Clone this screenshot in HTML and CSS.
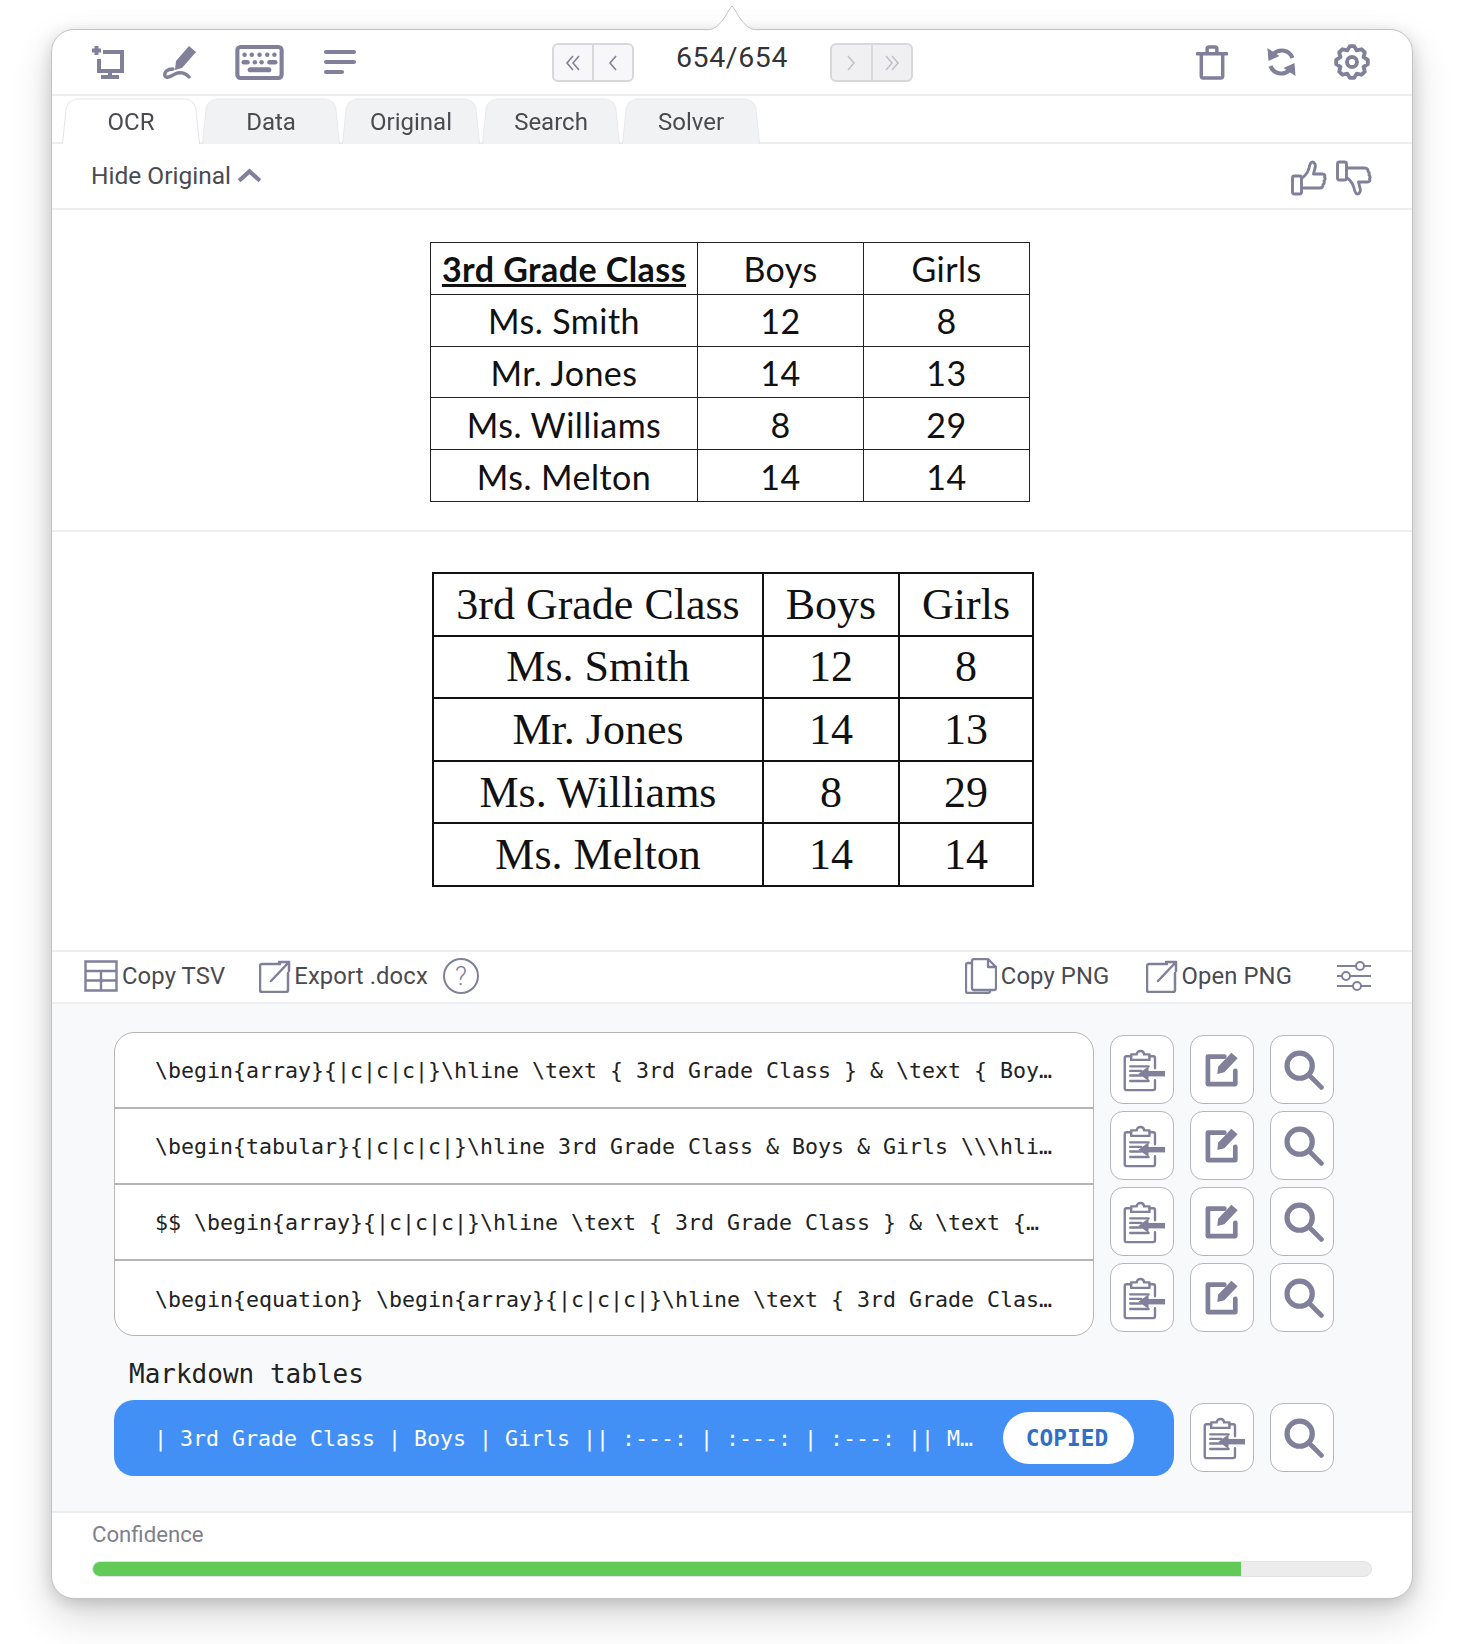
FILE: index.html
```html
<!DOCTYPE html>
<html lang="en">
<head>
<meta charset="utf-8">
<title>Snip</title>
<link rel="stylesheet" href="styles.css">
</head>
<body>
<svg class="defs" width="0" height="0" aria-hidden="true">
  <symbol id="i-clip" viewBox="0 0 48 48"><g fill="none" stroke="currentColor" stroke-width="2.6" stroke-linecap="round" stroke-linejoin="round"><path d="M36 22V11a2 2 0 0 0-2-2h-4M10 9H5a2 2 0 0 0-2 2v33a2 2 0 0 0 2 2h29a2 2 0 0 0 2-2V35"/><path d="M10 13V7h6c0-5 8-5 8 0h6v6z"/><path d="M9 20h20M9 25h12M9 30h12M9 36h20"/></g><path d="M26 25h21v6H26z" fill="currentColor"/><path d="M18 28l11-8v16z" fill="currentColor"/></symbol>
  <symbol id="i-edit" viewBox="0 0 46 46"><path d="M26 6H5v35h35V24" fill="none" stroke="currentColor" stroke-width="6" stroke-linejoin="round" stroke-linecap="round"/><path d="M35 1l8 7-17 18-9 2 1-9z" fill="currentColor"/></symbol>
  <symbol id="i-search" viewBox="0 0 46 46"><circle cx="18" cy="18" r="14.500" fill="none" stroke="currentColor" stroke-width="6"/><path d="M29 29l14 14" stroke="currentColor" stroke-width="5.500" stroke-linecap="round"/></symbol>
  <symbol id="i-ext" viewBox="0 0 32 33"><g fill="none" stroke="currentColor" stroke-width="2.500" stroke-linecap="round" stroke-linejoin="round"><path d="M21 4H3a2 2 0 0 0-2 2v24a2 2 0 0 0 2 2h24a2 2 0 0 0 2-2V13"/><path d="M12 21L30 2M20 2h10v9"/></g></symbol>
  <symbol id="i-thumb" viewBox="0 0 36 36"><g fill="none" stroke="currentColor" stroke-width="2.900" stroke-linejoin="round" stroke-linecap="round"><rect x="1.500" y="16" width="9" height="18" rx="2"/><path d="M11 18c3-2 6-6 7-10 .6-3 1.500-6 3.500-6s3.500 3 2.500 6l-1.500 6h9c2 0 3 1.500 2 3 1 1.500 .5 3-.5 4 .5 1.500 0 3-1 3.500 .3 2-1 3.500-3 3.500H11"/></g></symbol>
</svg>

<div class="window">
  <svg class="notch" width="56" height="27" viewBox="0 0 56 27" aria-hidden="true"><path d="M0 26c10 0 14-4 18-9 4-5 7-12 10-15 3 3 6 10 10 15 4 5 8 9 18 9" fill="#fff" stroke="#c4c4c4" stroke-width="1"/><path d="M0 26.500h56V27H0z" fill="#fff"/></svg>

  <header class="topbar">
    <div class="tools">
      <svg class="ic ic-screen" viewBox="0 0 32 34"><path d="M4.500 1v9M0 5.500h9M11 7h19v19H7V14M18 26v5M9 32h18" fill="none" stroke="currentColor" stroke-width="4"/></svg>
      <svg class="ic ic-pen" viewBox="0 0 34 34"><path d="M26 1l7 6-14 16-7 2 1-9z" fill="currentColor"/><path d="M10 24c-6 0-9 3-8 7 1 3 6 0 10-2s10-2 14 3" fill="none" stroke="currentColor" stroke-width="3.400" stroke-linecap="round"/></svg>
      <svg class="ic ic-keys" viewBox="0 0 47 34"><rect x="2" y="2" width="43" height="30" rx="3" fill="#fff" stroke="currentColor" stroke-width="4"/><g fill="currentColor"><circle cx="9" cy="9.500" r="2.200"/><circle cx="16" cy="9.500" r="2.200"/><circle cx="23.500" cy="9.500" r="2.200"/><circle cx="31" cy="9.500" r="2.200"/><circle cx="38" cy="9.500" r="2.200"/><rect x="6" y="14.500" width="8" height="4.400" rx="2.200"/><circle cx="19" cy="16.700" r="2.200"/><circle cx="25.500" cy="16.700" r="2.200"/><rect x="31" y="14.500" width="10" height="4.400" rx="2.200"/><rect x="12" y="21.500" width="23" height="5" rx="2.500"/></g></svg>
      <svg class="ic ic-lines" viewBox="0 0 32 26"><path d="M2 3h28M2 13h28M2 23h16" stroke="currentColor" stroke-width="4" stroke-linecap="round"/></svg>
    </div>
    <div class="pager">
      <div class="pagebtns">
        <span class="pagebtn"><svg class="chev" viewBox="0 0 18 18"><path d="M9 2L3 9l6 7M15 2L9 9l6 7"/></svg></span>
        <span class="pagebtn"><svg class="chev" viewBox="0 0 18 18"><path d="M12 2L6 9l6 7"/></svg></span>
      </div>
      <span class="count">654/654</span>
      <div class="pagebtns is-off">
        <span class="pagebtn"><svg class="chev" viewBox="0 0 18 18"><path d="M6 2l6 7-6 7"/></svg></span>
        <span class="pagebtn"><svg class="chev" viewBox="0 0 18 18"><path d="M3 2l6 7-6 7M9 2l6 7-6 7"/></svg></span>
      </div>
    </div>
    <div class="tools tools-right">
      <svg class="ic ic-trash" viewBox="0 0 32 36"><path d="M1 9h30M11 8V4a2 2 0 0 1 2-2h6a2 2 0 0 1 2 2v4M5 9v23a2 2 0 0 0 2 2h18a2 2 0 0 0 2-2V9" fill="none" stroke="currentColor" stroke-width="3.600" stroke-linecap="round"/></svg>
      <svg class="ic ic-sync" viewBox="0 0 32 32"><path d="M27 12A11.500 11.500 0 0 0 8 8M5 20a11.500 11.500 0 0 0 19 4" fill="none" stroke="currentColor" stroke-width="4.200"/><path d="M2 2l1 13 11-5zM30 30l-1-13-11 5z" fill="currentColor"/></svg>
      <svg class="ic ic-gear" viewBox="0 0 36 36"><polygon points="15.770,2.160 20.230,2.160 22.780,6.450 27.630,5.220 30.780,8.370 29.550,13.220 33.840,15.770 33.840,20.230 29.550,22.780 30.780,27.630 27.630,30.780 22.780,29.550 20.230,33.840 15.770,33.840 13.220,29.550 8.370,30.780 5.220,27.630 6.450,22.780 2.160,20.230 2.160,15.770 6.450,13.220 5.220,8.370 8.370,5.220 13.220,6.450" fill="none" stroke="currentColor" stroke-width="3.800" stroke-linejoin="round"/><circle cx="18" cy="18" r="5" fill="none" stroke="currentColor" stroke-width="3.800"/></svg>
    </div>
  </header>

  <nav class="tabs">
    <span class="tab is-active">OCR</span>
    <span class="tab">Data</span>
    <span class="tab">Original</span>
    <span class="tab">Search</span>
    <span class="tab">Solver</span>
  </nav>

  <div class="hide-row">
    <span class="hide-label">Hide Original</span>
    <svg class="chev-up" viewBox="0 0 24 14"><path d="M2 12L12 3l10 9" fill="none" stroke="currentColor" stroke-width="4"/></svg>
    <span class="spacer"></span>
    <svg class="thumb"><use href="#i-thumb"/></svg>
    <svg class="thumb thumb-down"><use href="#i-thumb"/></svg>
  </div>

  <section class="original">
    <table class="sheet">
      <tr><th class="c1">3rd Grade Class</th><td class="c2">Boys</td><td class="c3">Girls</td></tr>
      <tr><td>Ms. Smith</td><td>12</td><td>8</td></tr>
      <tr><td>Mr. Jones</td><td>14</td><td>13</td></tr>
      <tr><td>Ms. Williams</td><td>8</td><td>29</td></tr>
      <tr><td>Ms. Melton</td><td>14</td><td>14</td></tr>
    </table>
  </section>

  <section class="rendered">
    <table class="latex">
      <tr><td class="c1">3rd Grade Class</td><td class="c2">Boys</td><td class="c3">Girls</td></tr>
      <tr><td>Ms. Smith</td><td>12</td><td>8</td></tr>
      <tr><td>Mr. Jones</td><td>14</td><td>13</td></tr>
      <tr><td>Ms. Williams</td><td>8</td><td>29</td></tr>
      <tr><td>Ms. Melton</td><td>14</td><td>14</td></tr>
    </table>
  </section>

  <div class="actionsbar">
    <span class="act act-tsv"><svg class="ic-act ic-table" viewBox="0 0 34 32"><path d="M1.500 1.500h31v29h-31zM1.500 11h31M1.500 20.500h31M17 11v19.500" fill="none" stroke="currentColor" stroke-width="2.400"/></svg>Copy TSV</span>
    <span class="act act-docx"><svg class="ic-act"><use href="#i-ext"/></svg>Export .docx</span>
    <span class="help">?</span>
    <span class="spacer"></span>
    <span class="act act-copy"><svg class="ic-act ic-copy" viewBox="0 0 32 36"><path d="M9 1h14l8 8v21a2 2 0 0 1-2 2H9a2 2 0 0 1-2-2V3a2 2 0 0 1 2-2zM23 1v8h8M7 5H3a2 2 0 0 0-2 2v26a2 2 0 0 0 2 2h20a2 2 0 0 0 2-2v-1" fill="none" stroke="currentColor" stroke-width="2.300" stroke-linejoin="round"/></svg>Copy PNG</span>
    <span class="act act-open"><svg class="ic-act"><use href="#i-ext"/></svg>Open PNG</span>
    <svg class="ic-sliders" viewBox="0 0 34 30"><g fill="#fff" stroke="currentColor" stroke-width="2"><path d="M0 5h34M0 15h34M0 25h34"/><circle cx="23" cy="5" r="4"/><circle cx="9" cy="15" r="4"/><circle cx="20" cy="25" r="4"/></g></svg>
  </div>

  <section class="results">
    <div class="result-grid">
      <div class="latex-list">
        <div class="latex-row">\begin{array}{|c|c|c|}\hline \text { 3rd Grade Class } &amp; \text { Boy…</div>
        <div class="latex-row">\begin{tabular}{|c|c|c|}\hline 3rd Grade Class &amp; Boys &amp; Girls \\\hli…</div>
        <div class="latex-row">$$ \begin{array}{|c|c|c|}\hline \text { 3rd Grade Class } &amp; \text {…</div>
        <div class="latex-row">\begin{equation} \begin{array}{|c|c|c|}\hline \text { 3rd Grade Clas…</div>
      </div>
      <div class="btn-grid">
        <button class="sq"><svg class="sq-clip"><use href="#i-clip"/></svg></button><button class="sq"><svg class="sq-edit"><use href="#i-edit"/></svg></button><button class="sq"><svg class="sq-search"><use href="#i-search"/></svg></button>
        <button class="sq"><svg class="sq-clip"><use href="#i-clip"/></svg></button><button class="sq"><svg class="sq-edit"><use href="#i-edit"/></svg></button><button class="sq"><svg class="sq-search"><use href="#i-search"/></svg></button>
        <button class="sq"><svg class="sq-clip"><use href="#i-clip"/></svg></button><button class="sq"><svg class="sq-edit"><use href="#i-edit"/></svg></button><button class="sq"><svg class="sq-search"><use href="#i-search"/></svg></button>
        <button class="sq"><svg class="sq-clip"><use href="#i-clip"/></svg></button><button class="sq"><svg class="sq-edit"><use href="#i-edit"/></svg></button><button class="sq"><svg class="sq-search"><use href="#i-search"/></svg></button>
      </div>
    </div>
    <h2 class="md-title">Markdown tables</h2>
    <div class="md-row">
      <div class="md-bar">
        <span class="md-text">| 3rd Grade Class | Boys | Girls || :---: | :---: | :---: || M…</span>
        <span class="copied">COPIED</span>
      </div>
      <button class="sq"><svg class="sq-clip"><use href="#i-clip"/></svg></button><button class="sq"><svg class="sq-search"><use href="#i-search"/></svg></button>
    </div>
  </section>

  <footer class="confidence">
    <div class="conf-label">Confidence</div>
    <div class="track"><div class="fill" style="width:89.9%"></div></div>
  </footer>
</div>
</body>
</html>
```
FILE: styles.css
```css
* { box-sizing: border-box; }
html, body { margin: 0; padding: 0; background: #fff; }
body {
  width: 1458px;
  height: 1644px;
  overflow: hidden;
  padding: 29px 0 0 51px;
  font-family: "Roboto", "Liberation Sans", sans-serif;
  color: #3f3f46;
}
.defs { position: absolute; }
.window {
  position: relative;
  width: 1362px;
  height: 1570px;
  background: #fff;
  border: 1px solid #c2c2c2;
  border-radius: 23px;
  box-shadow: 0 18px 40px rgba(0, 0, 0, .16), -4px 4px 16px rgba(0, 0, 0, .08), 4px 4px 16px rgba(0, 0, 0, .08);
}
.notch { position: absolute; left: 652px; top: -26px; }
.spacer { flex: 1; }

/* top bar */
.topbar {
  position: relative;
  height: 66px;
  display: flex;
  align-items: center;
  padding: 0 42px 0 40px;
  border-bottom: 2px solid #eeeeee;
  color: #80809a;
}
.tools { display: flex; align-items: center; }
.tools-right { margin-left: auto; }
.ic { display: block; }
.ic-screen { width: 32px; height: 34px; margin-right: 39px; }
.ic-pen { width: 34px; height: 34px; margin-right: 38px; }
.ic-keys { width: 49px; height: 35px; margin-right: 40px; }
.ic-lines { width: 32px; height: 26px; }
.ic-trash { width: 32px; height: 35px; margin-right: 37px; }
.ic-sync { width: 33px; height: 32px; margin-right: 36px; }
.ic-gear { width: 36px; height: 36px; }
.pager {
  position: absolute;
  left: 500px;
  top: 13px;
  display: flex;
  align-items: center;
}
.pagebtns {
  display: flex;
  width: 82px;
  height: 39px;
  background: #f7f7f9;
  border: 2px solid #d7d7dc;
  border-radius: 6px;
}
.pagebtns.is-off { width: 83px; background: #f0f0f3; color: #c0c0cc; }
.pagebtn {
  flex: 1;
  display: flex;
  align-items: center;
  justify-content: center;
}
.pagebtn + .pagebtn { border-left: 2px solid #d7d7dc; }
.chev { width: 18px; height: 18px; fill: none; stroke: currentColor; stroke-width: 1.600; }
.count {
  width: 196px;
  text-align: center;
  font-size: 28.5px;
  letter-spacing: .6px;
  color: #333338;
  position: relative;
  top: -5px;
}

/* tabs */
.tabs {
  height: 48px;
  display: flex;
  align-items: flex-end;
  padding: 0 0 0 10px;
  border-bottom: 2px solid #eeeeee;
  gap: 2px;
}
.tab {
  position: relative;
  z-index: 0;
  width: 138px;
  height: 47px;
  margin-bottom: -2px;
  padding-top: 2px;
  display: flex;
  align-items: center;
  justify-content: center;
  font-size: 24px;
  color: #4a4a50;
}
.tab::before {
  content: "";
  position: absolute;
  inset: -2px 0 0 0;
  z-index: -1;
  background: #f1f2f4;
  border: 1px solid #e8e8ec;
  border-bottom: 0;
  border-radius: 12px 12px 0 0;
  transform: perspective(70px) rotateX(6deg);
  transform-origin: bottom;
}
.tab.is-active::before { background: #fff; border-color: #e4e4e8; }

/* hide row */
.hide-row {
  height: 66px;
  display: flex;
  align-items: center;
  padding: 0 40px 2px 39px;
  border-bottom: 2px solid #eeeeee;
  color: #80809a;
}
.hide-label { font-size: 24.500px; color: #4a4a50; margin-right: 6px; }
.chev-up { width: 25px; height: 15px; margin-top: 1px; }
.thumb { width: 36px; height: 36px; margin: 5px 0 0 9px; }
.thumb-down { transform: scaleY(-1); }

/* pictures of tables */
.original {
  height: 322px;
  padding: 32px 4px 0 0;
  display: flex;
  justify-content: center;
  border-bottom: 2px solid #eeeeee;
}
.rendered {
  height: 420px;
  padding: 40px 0 0 2px;
  display: flex;
  justify-content: center;
  border-bottom: 2px solid #eeeeee;
}
.sheet, .latex { border-collapse: collapse; table-layout: fixed; color: #111; }
.sheet { width: 600px; height: 259px; font-family: "Lato", sans-serif; font-size: 34px; letter-spacing: .45px; }
.sheet th, .sheet td { border: 1px solid #222; padding: 1px 0 0; text-align: center; font-weight: 400; height: 51.800px; }
.sheet th { font-weight: 700; text-decoration: underline; padding-top: 0; }
.sheet .c1 { width: 267px; }
.sheet .c2, .sheet .c3 { width: 166px; }
.latex { width: 600px; height: 313px; font-family: "Liberation Serif", serif; font-size: 44px; }
.latex td { border: 2px solid #111; padding: 0; text-align: center; height: 62.600px; }
.latex .c1 { width: 330px; }
.latex .c2 { width: 136px; }
.latex .c3 { width: 134px; }

/* actions */
.actionsbar {
  height: 52px;
  display: flex;
  align-items: center;
  padding: 0 41px 2px 32px;
  border-bottom: 2px solid #eeeeee;
  font-size: 23.800px;
  color: #4a4a50;
}
.act { display: flex; align-items: center; gap: 4px; letter-spacing: .12px; }
.act-docx, .act-open { gap: 3px; }
.ic-act { width: 32px; height: 33px; color: #80809a; flex: none; }
.ic-table { width: 34px; height: 32px; }
.ic-copy { width: 32px; height: 36px; }
.act-docx { margin-left: 34px; }
.act-open { margin-left: 37px; }
.help {
  width: 36px;
  height: 36px;
  margin-left: 15px;
  border: 2px solid #80809a;
  border-radius: 50%;
  display: flex;
  align-items: center;
  justify-content: center;
  font-size: 26px;
  font-weight: 300;
  color: #80809a;
}
.ic-sliders { width: 34px; height: 30px; margin-left: 45px; color: #80809a; }

/* results */
.results {
  height: 509px;
  background: #f8f9fa;
  border-bottom: 2px solid #eeeeee;
  padding: 28px 0 0 62px;
  font-family: "DejaVu Sans Mono", "Liberation Mono", monospace;
}
.result-grid { display: flex; gap: 16px; }
.latex-list {
  width: 980px;
  height: 304px;
  background: #fff;
  border: 1px solid #b5b5b5;
  border-radius: 20px;
}
.latex-row {
  height: 76px;
  padding-left: 40px;
  display: flex;
  align-items: center;
  font-size: 21.6px;
  color: #222;
  white-space: nowrap;
  border-bottom: 2px solid #b5b5b5;
}
.latex-row:last-child { border-bottom: 0; }
.btn-grid {
  display: grid;
  grid-template-columns: repeat(3, 64px);
  grid-auto-rows: 69px;
  column-gap: 16px;
  row-gap: 7px;
  padding-top: 3px;
}
.sq {
  width: 64px;
  height: 69px;
  padding: 0;
  background: #fff;
  border: 1px solid #b5b5bd;
  border-radius: 13px;
  color: #80809a;
  display: flex;
  align-items: center;
  justify-content: center;
}
.sq-clip { width: 44px; height: 46px; margin-left: 4px; }
.sq-edit { width: 36px; height: 36px; }
.sq-search { width: 40px; height: 42px; margin-left: 4px; }
.md-title {
  margin: 21px 0 9px 15px;
  font-size: 26px;
  font-weight: 400;
  line-height: 34px;
  color: #222;
}
.md-row { display: flex; align-items: flex-start; gap: 16px; }
.md-bar {
  width: 1060px;
  height: 76px;
  background: #4290f6;
  border-radius: 20px;
  display: flex;
  align-items: center;
  padding: 0 40px;
  color: #fff;
}
.md-text { flex: 1; font-size: 21.6px; white-space: nowrap; }
.copied {
  width: 131px;
  height: 52px;
  padding-right: 3px;
  background: #fff;
  border-radius: 26px;
  display: flex;
  align-items: center;
  justify-content: center;
  font-weight: 700;
  font-size: 22.800px;
  color: #2f6fc4;
}
.md-row .sq { margin-top: 3px; }

/* confidence */
.confidence { padding: 7px 40px 0 40px; }
.conf-label { font-size: 22.200px; color: #80808c; line-height: 28px; }
.track {
  margin-top: 13px;
  height: 16px;
  background: #ececec;
  border: 1px solid #e2e2e2;
  border-radius: 8px;
  overflow: hidden;
}
.fill { background: #62cb58; margin: -1px 0 0 -1px; height: 16px; }
```
